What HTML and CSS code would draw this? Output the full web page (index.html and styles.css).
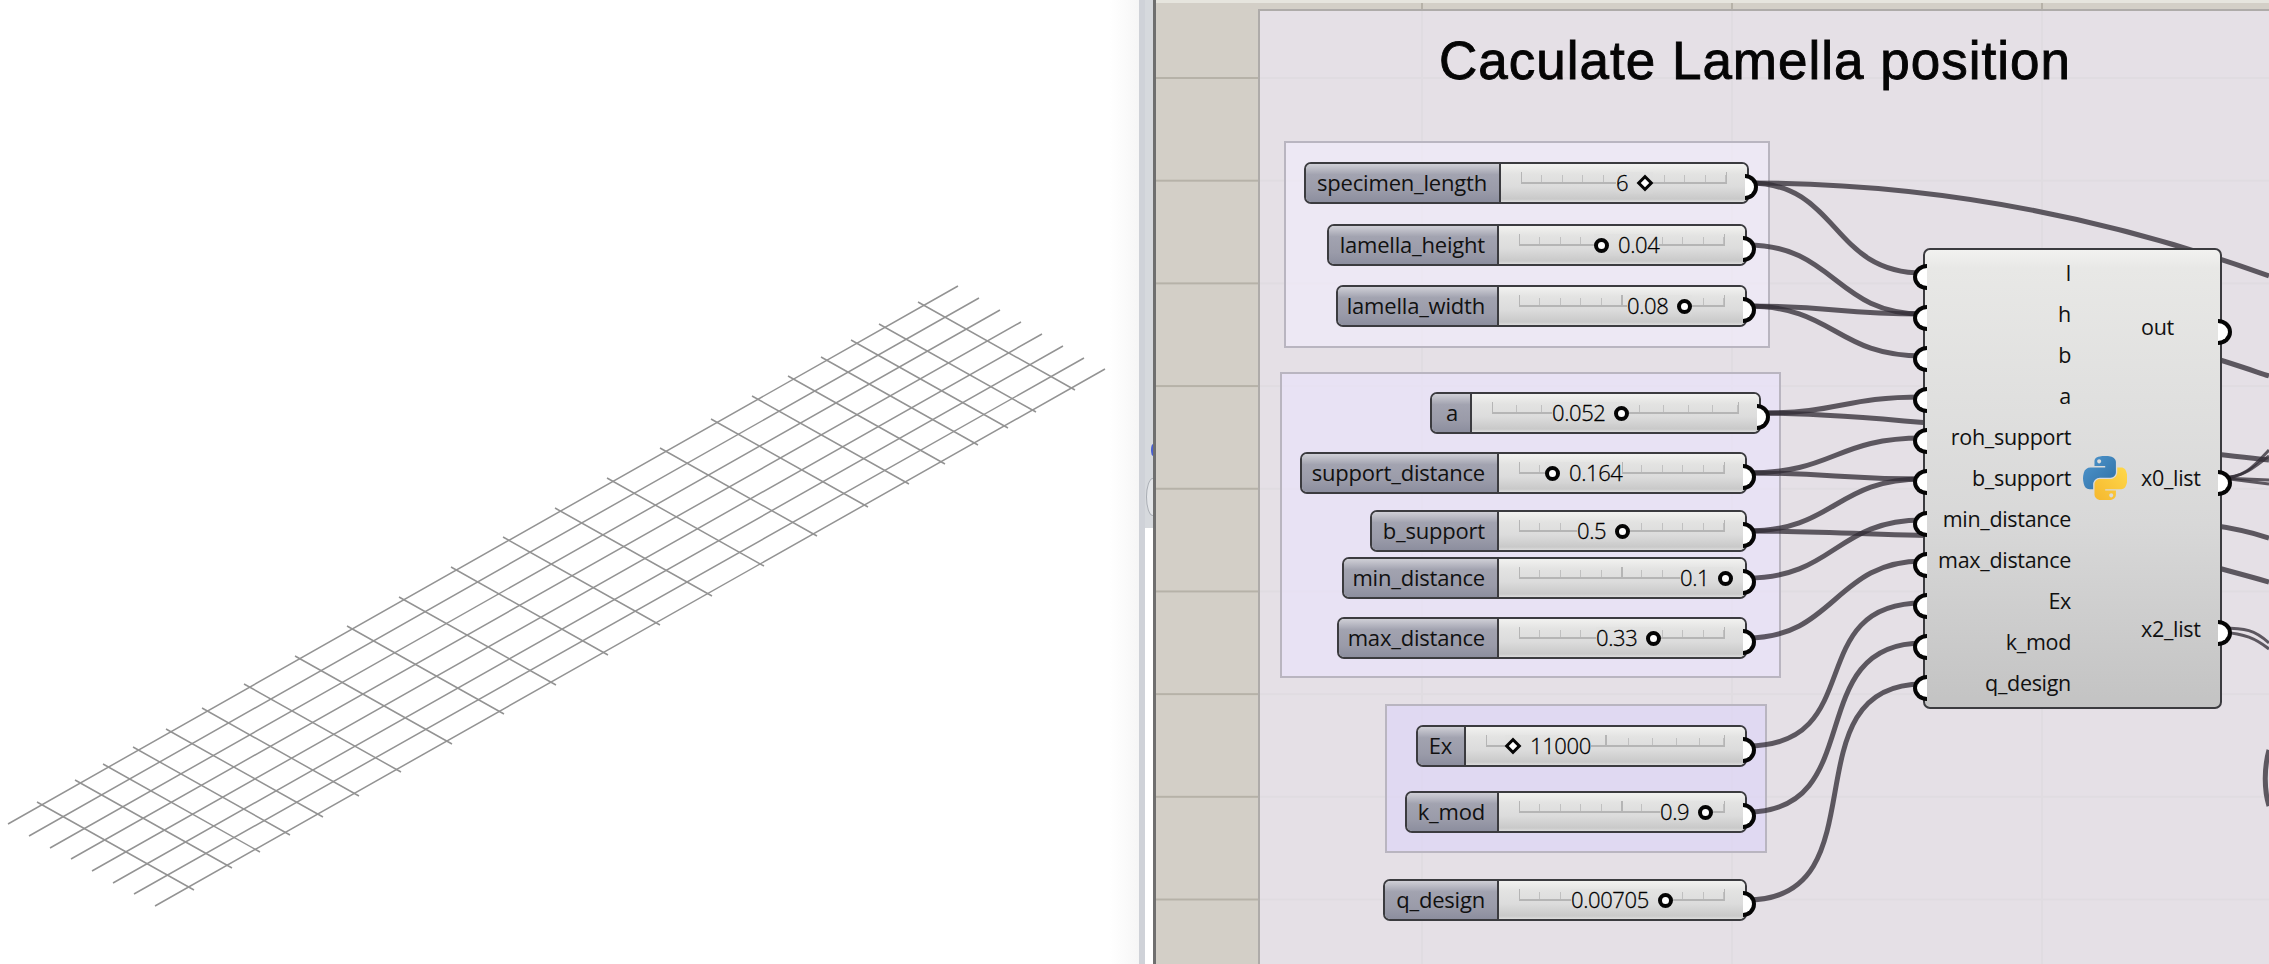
FILE: index.html
```html
<!DOCTYPE html>
<html lang="en">
<head>
<meta charset="utf-8">
<title>Caculate Lamella position</title>
<link rel="stylesheet" href="styles.css">
</head>
<body>
<main class="app">
  <section class="viewport">
    <svg class="mesh" viewBox="0 0 1139 964" width="1139" height="964" aria-hidden="true">
      <g class="mesh-long">
        <path d="M8 824L958 286M29 836L979 298M50 848L1000 310M71 859L1021 322M92 871L1042 334M113 883L1063 346M134 894L1084 358M155 906L1105 369"/>
      </g>
      <g class="mesh-cross">
        <path d="M37 802l157 88M75 780l157 88M103 764l157 88M133 747l157 88M166 729l157 88M202 708l157 88M244 684l157 88M295 656l157 88M347 626l157 88M399 597l157 88M451 567l157 88M503 537l157 88M555 508l157 88M607 478l157 88M660 448l157 88M711 419l157 88M752 396l157 88M788 376l157 88M821 357l157 88M851 340l157 88M879 324l157 88M918 302l157 88"/>
      </g>
    </svg>
  </section>
  <aside class="strip">
    <span class="strip-dot"></span>
    <span class="strip-arc"></span>
    <span class="strip-foot"></span>
  </aside>
  <section class="canvas">
    <div class="topline"></div>
    <div class="group group-main">
      <h1 class="title">Caculate Lamella position</h1>
    </div>
    <div class="group group-a"></div>
    <div class="group group-b"></div>
    <div class="group group-c"></div>

    <svg class="wires" viewBox="1156 0 1113 964" width="1113" height="964" aria-hidden="true">
      <path d="M1749 183C1880 183 2060 200 2269 276"/>
      <path d="M1749 183C1840 183 1830 273 1923 273"/>
      <path d="M1747 245C1835 245 1835 314 1923 314"/>
      <path d="M1747 306C1835 306 1835 314 1923 314"/>
      <path d="M1747 306C1835 306 1835 356 1923 356"/>
      <path d="M1761 413C1842 413 1842 397 1923 397"/>
      <path d="M1761 413C1860 413 2000 430 2269 460"/>
      <path d="M1747 473C1835 473 1835 438 1923 438"/>
      <path d="M1747 473C1835 473 1835 479 1923 479"/>
      <path d="M1747 531C1835 531 1835 479 1923 479"/>
      <path d="M1747 531C1820 531 1900 536 1950 536S2150 500 2269 538"/>
      <path d="M1747 578C1835 578 1835 520 1923 520"/>
      <path d="M1747 638C1835 638 1835 561 1923 561"/>
      <path d="M1747 746C1870 746 1800 603 1923 603"/>
      <path d="M1747 812C1870 812 1800 643 1923 643"/>
      <path d="M1747 900C1885 900 1785 684 1923 684"/>
      <path d="M2200 354C2225 361 2245 368 2269 376"/>
      <path d="M2200 563C2225 570 2245 575 2269 582"/>
      <path d="M2269 750C2264 768 2264 790 2269 806"/>
      <g class="wires-thin">
        <path d="M2222 478C2245 478 2255 465 2269 450"/>
        <path d="M2222 478C2245 476 2250 470 2269 456"/>
        <path d="M2222 478L2269 480"/>
        <path d="M2222 478L2269 484"/>
        <path d="M2222 628C2245 628 2255 630 2269 643"/>
        <path d="M2222 632C2245 634 2255 638 2269 649"/>
      </g>
    </svg>

    <div class="slider n-specimen">
      <span class="name">specimen_length</span>
      <div class="track"><span class="rail"></span>
        <span class="reading" style="left:115px"><span class="val">6</span><i class="knob diamond"></i></span></div>
    </div>
    <div class="slider n-height">
      <span class="name">lamella_height</span>
      <div class="track"><span class="rail"></span>
        <span class="reading" style="left:95px"><i class="knob"></i><span class="val">0.04</span></span></div>
    </div>
    <div class="slider n-width">
      <span class="name">lamella_width</span>
      <div class="track"><span class="rail"></span>
        <span class="reading" style="left:128px"><span class="val">0.08</span><i class="knob"></i></span></div>
    </div>
    <div class="slider n-a">
      <span class="name">a</span>
      <div class="track"><span class="rail"></span>
        <span class="reading" style="left:80px"><span class="val">0.052</span><i class="knob"></i></span></div>
    </div>
    <div class="slider n-support">
      <span class="name">support_distance</span>
      <div class="track"><span class="rail"></span>
        <span class="reading" style="left:46px"><i class="knob"></i><span class="val">0.164</span></span></div>
    </div>
    <div class="slider n-bsupport">
      <span class="name">b_support</span>
      <div class="track"><span class="rail"></span>
        <span class="reading" style="left:78px"><span class="val">0.5</span><i class="knob"></i></span></div>
    </div>
    <div class="slider n-min">
      <span class="name">min_distance</span>
      <div class="track"><span class="rail"></span>
        <span class="reading" style="left:181px"><span class="val">0.1</span><i class="knob"></i></span></div>
    </div>
    <div class="slider n-max">
      <span class="name">max_distance</span>
      <div class="track"><span class="rail"></span>
        <span class="reading" style="left:97px"><span class="val">0.33</span><i class="knob"></i></span></div>
    </div>
    <div class="slider n-ex">
      <span class="name">Ex</span>
      <div class="track"><span class="rail"></span>
        <span class="reading" style="left:39px"><i class="knob diamond"></i><span class="val">11000</span></span></div>
    </div>
    <div class="slider n-kmod">
      <span class="name">k_mod</span>
      <div class="track"><span class="rail"></span>
        <span class="reading" style="left:161px"><span class="val">0.9</span><i class="knob"></i></span></div>
    </div>
    <div class="slider n-q">
      <span class="name">q_design</span>
      <div class="track"><span class="rail"></span>
        <span class="reading" style="left:72px"><span class="val">0.00705</span><i class="knob"></i></span></div>
    </div>

    <div class="component">
      <ul class="inputs">
        <li>l</li><li>h</li><li>b</li><li>a</li><li>roh_support</li><li>b_support</li>
        <li>min_distance</li><li>max_distance</li><li>Ex</li><li>k_mod</li><li>q_design</li>
      </ul>
      <svg class="python" viewBox="0 0 110 110" width="44" height="44" aria-hidden="true">
        <defs>
          <linearGradient id="pyblue" x1="0" y1="0" x2="1" y2="1">
            <stop offset="0" stop-color="#4f97cf"/><stop offset="1" stop-color="#2f6ea3"/>
          </linearGradient>
          <linearGradient id="pyyellow" x1="0" y1="1" x2="1" y2="0">
            <stop offset="0" stop-color="#f5b72e"/><stop offset="1" stop-color="#ffd84a"/>
          </linearGradient>
        </defs>
        <path fill="url(#pyblue)" d="M54.919 0c-4.584.022-8.961.413-12.813 1.095C30.76 3.099 28.7 7.295 28.7 15.032V25.25h26.813v3.406H18.638c-7.793 0-14.616 4.684-16.75 13.594-2.462 10.213-2.571 16.586 0 27.25 1.905 7.938 6.457 13.594 14.25 13.594h9.218v-12.25c0-8.85 7.657-16.656 16.75-16.656h26.782c7.454 0 13.406-6.138 13.406-13.625V15.032c0-7.266-6.13-12.725-13.406-13.937C64.282.328 59.502-.02 54.918 0zM40.419 8.22c2.77 0 5.031 2.299 5.031 5.125 0 2.816-2.262 5.094-5.031 5.094-2.78 0-5.032-2.278-5.032-5.094 0-2.826 2.252-5.125 5.032-5.125z"/>
        <path fill="url(#pyyellow)" d="M85.638 28.657v11.906c0 9.231-7.826 17-16.75 17H42.106c-7.336 0-13.406 6.279-13.406 13.625v25.531c0 7.266 6.319 11.54 13.406 13.625 8.488 2.496 16.627 2.947 26.782 0 6.75-1.954 13.406-5.888 13.406-13.625V86.5H55.513v-3.405H95.7c7.793 0 10.696-5.436 13.406-13.594 2.8-8.399 2.68-16.476 0-27.25-1.926-7.757-5.604-13.594-13.406-13.594zM70.575 93.313c2.78 0 5.032 2.278 5.032 5.094 0 2.826-2.252 5.125-5.032 5.125-2.77 0-5.031-2.299-5.031-5.125 0-2.816 2.261-5.094 5.031-5.094z"/>
      </svg>
      <ul class="outputs">
        <li>out</li><li>x0_list</li><li>x2_list</li>
      </ul>
    </div>
  </section>
</main>
</body>
</html>
```
FILE: styles.css
```css
* { box-sizing: border-box; }
html, body { margin: 0; height: 100%; overflow: hidden; background: #fff; }
body { font-family: "Open Sans", "Noto Sans", sans-serif; color: #111; }
.app { display: flex; width: 2269px; height: 964px; }

/* 3D viewport */
.viewport {
  flex: 0 0 1139px;
  background: linear-gradient(to right, #fff 1110px, #f6f6f6 1139px);
}
.mesh { display: block; }
.mesh path { fill: none; stroke: #939393; stroke-width: 1.5; }

/* sidebar strip between panels */
.strip {
  flex: 0 0 14px;
  position: relative;
  background: linear-gradient(to right, #cfd2d8 0 6px, #d6d9dd 6px 14px);
}
.strip-dot {
  position: absolute; left: 12px; top: 444px;
  width: 4px; height: 12px; border-radius: 50%; background: #4a5fd0;
}
.strip-arc {
  position: absolute; left: 7px; top: 478px;
  width: 14px; height: 38px; border-radius: 50%;
  border: 1px solid #a9adb4; background: #e4e6e9;
}
.strip-foot {
  position: absolute; left: 6px; right: 0; top: 528px; bottom: 0; background: #fff;
}

/* grasshopper canvas */
.canvas {
  flex: 1;
  position: relative;
  overflow: hidden;
  border-left: 3px solid #6f6f6f;
  background-color: #d3cfc7;
  background-image:
    linear-gradient(#b6b2a8 2px, transparent 2px),
    linear-gradient(to right, #b6b2a8 2px, transparent 2px);
  background-size: 100% 102.7px, 310px 100%;
  background-position: 0 77px, 265px 0;
}
.topline { position: absolute; left: 0; right: 0; top: 0; height: 3px; background: #e6e5de; }

.group { position: absolute; border: 2px solid #b9b5c0; }
.group-main {
  left: 102px; top: 9px; right: -4px; bottom: -4px;
  background: rgba(231, 227, 235, .85);
  border-color: #aeaba9;
  padding: 27px 0 0 179px;
}
.title {
  margin: 0;
  font: 400 53px/46px "Liberation Sans", Arial, sans-serif;
  letter-spacing: 1px;
  color: #050505;
  -webkit-text-stroke: .9px #050505;
  white-space: nowrap;
}
.group-a { left: 128px; top: 141px; width: 486px; height: 207px; background: rgba(241, 235, 250, .7); }
.group-b { left: 124px; top: 372px; width: 501px; height: 306px; background: rgba(234, 227, 250, .7); }
.group-c { left: 229px; top: 704px; width: 382px; height: 149px; background: rgba(222, 214, 247, .7); }

.wires { position: absolute; left: 0; top: 0; }
.wires path { fill: none; stroke: rgba(48, 44, 52, .76); stroke-width: 5; }
.wires .wires-thin path { stroke-width: 3; }

/* number sliders */
.slider {
  position: absolute;
  display: flex;
  height: 42px;
  border: 2px solid #3b3b3f;
  border-radius: 7px;
  background: #ddd;
  z-index: 2;
}
.slider::after {
  content: "";
  position: absolute; right: -11px; top: 10px;
  width: 9px; height: 18px;
  border: 4px solid #050505; border-left: 0;
  border-radius: 0 100% 100% 0 / 0 50% 50% 0;
  background: #fff;
}
.name {
  flex: 0 0 var(--split);
  border-right: 2px solid #3b3b3f;
  border-radius: 5px 0 0 5px;
  padding-right: 12px;
  text-align: right;
  font-size: 22px;
  line-height: 36px;
  letter-spacing: -.2px;
  white-space: nowrap;
  background: linear-gradient(#cfcfd6 0, #a2a3b0 28%, #9a9ba9 70%, #8c8e9e 100%);
}
.track {
  flex: 1;
  position: relative;
  border-radius: 0 5px 5px 0;
  background: linear-gradient(#f2f2f0 0, #e3e3e2 26%, #dcdcdc 60%, #c9c9c9 92%, #dcdcdc 100%);
}
.rail {
  position: absolute; left: 20px; right: 20px; top: 8px; height: 12px;
  border: solid #b5b5b5; border-width: 0 1.5px 2px;
  background:
    linear-gradient(to right, transparent calc(50% - 1px), #b5b5b5 calc(50% - 1px) calc(50% + 1px), transparent calc(50% + 1px)) 0 0 / 100% 100% no-repeat,
    repeating-linear-gradient(to right, transparent 0 calc(10% - 1px), #c0c0c0 calc(10% - 1px) 10%) 0 100% / 100% 7px no-repeat;
}
.reading {
  position: absolute; top: 8px;
  display: flex; align-items: center; gap: 9px;
  height: 22px;
  background: linear-gradient(#e3e3e2 0, #dcdcdc 67%, #d2d2d2 100%);
}
.val {
  margin-top: -2px;
  font-size: 22px; font-weight: 300; line-height: 22px; letter-spacing: -.4px;
  color: #000; -webkit-text-stroke: .3px #000;
}
.knob {
  flex: none;
  width: 15px; height: 15px;
  border: 4px solid #050505; border-radius: 50%;
  background: #fff;
}
.knob.diamond {
  width: 12px; height: 12px; margin: 0 2px;
  border-width: 3px; border-radius: 0;
  transform: rotate(45deg);
}

.n-specimen { left: 148px; top: 162px; width: 445px; --split: 195px; }
.n-height   { left: 171px; top: 224px; width: 420px; --split: 170px; }
.n-width    { left: 180px; top: 285px; width: 411px; --split: 161px; }
.n-a        { left: 274px; top: 392px; width: 331px; --split: 40px; }
.n-support  { left: 144px; top: 452px; width: 447px; --split: 197px; }
.n-bsupport { left: 214px; top: 510px; width: 377px; --split: 127px; }
.n-min      { left: 186px; top: 557px; width: 405px; --split: 155px; }
.n-max      { left: 181px; top: 617px; width: 410px; --split: 160px; }
.n-ex       { left: 260px; top: 725px; width: 331px; --split: 48px; }
.n-kmod     { left: 249px; top: 791px; width: 342px; --split: 92px; }
.n-q        { left: 227px; top: 879px; width: 364px; --split: 114px; }

/* python component */
.component {
  position: absolute; left: 767px; top: 248px; width: 299px; height: 461px;
  display: grid;
  grid-template-columns: 146px 70px 1fr;
  align-items: start;
  padding-top: 2.5px;
  border: 2px solid #3b3b3f;
  border-radius: 7px;
  background: linear-gradient(#f2f2f0 0, #e8e8e6 4%, #d8d8d8 60%, #c3c3c3 100%);
  z-index: 2;
}
.inputs, .outputs {
  list-style: none; margin: 0; padding: 0;
  font-size: 21.5px; letter-spacing: -.3px;
  height: 452px;
}
.inputs li {
  position: relative;
  height: 41.1px; line-height: 40px;
  text-align: right;
}
.inputs li::before {
  content: "";
  position: absolute; left: -12px; top: 11.5px;
  width: 10px; height: 18px;
  border: 4px solid #050505; border-right: 0;
  border-radius: 100% 0 0 100% / 50% 0 0 50%;
  background: #fff;
}
.python { justify-self: center; align-self: center; margin: -3px 0 0 -2px; }
.outputs { display: flex; flex-direction: column; }
.outputs li { position: relative; flex: 1; display: flex; align-items: center; padding-bottom: 2px; }
.outputs li::after {
  content: "";
  position: absolute; right: -12px; top: calc(50% - 9px);
  width: 10px; height: 18px;
  border: 4px solid #050505; border-left: 0;
  border-radius: 0 100% 100% 0 / 0 50% 50% 0;
  background: #fff;
}
```
